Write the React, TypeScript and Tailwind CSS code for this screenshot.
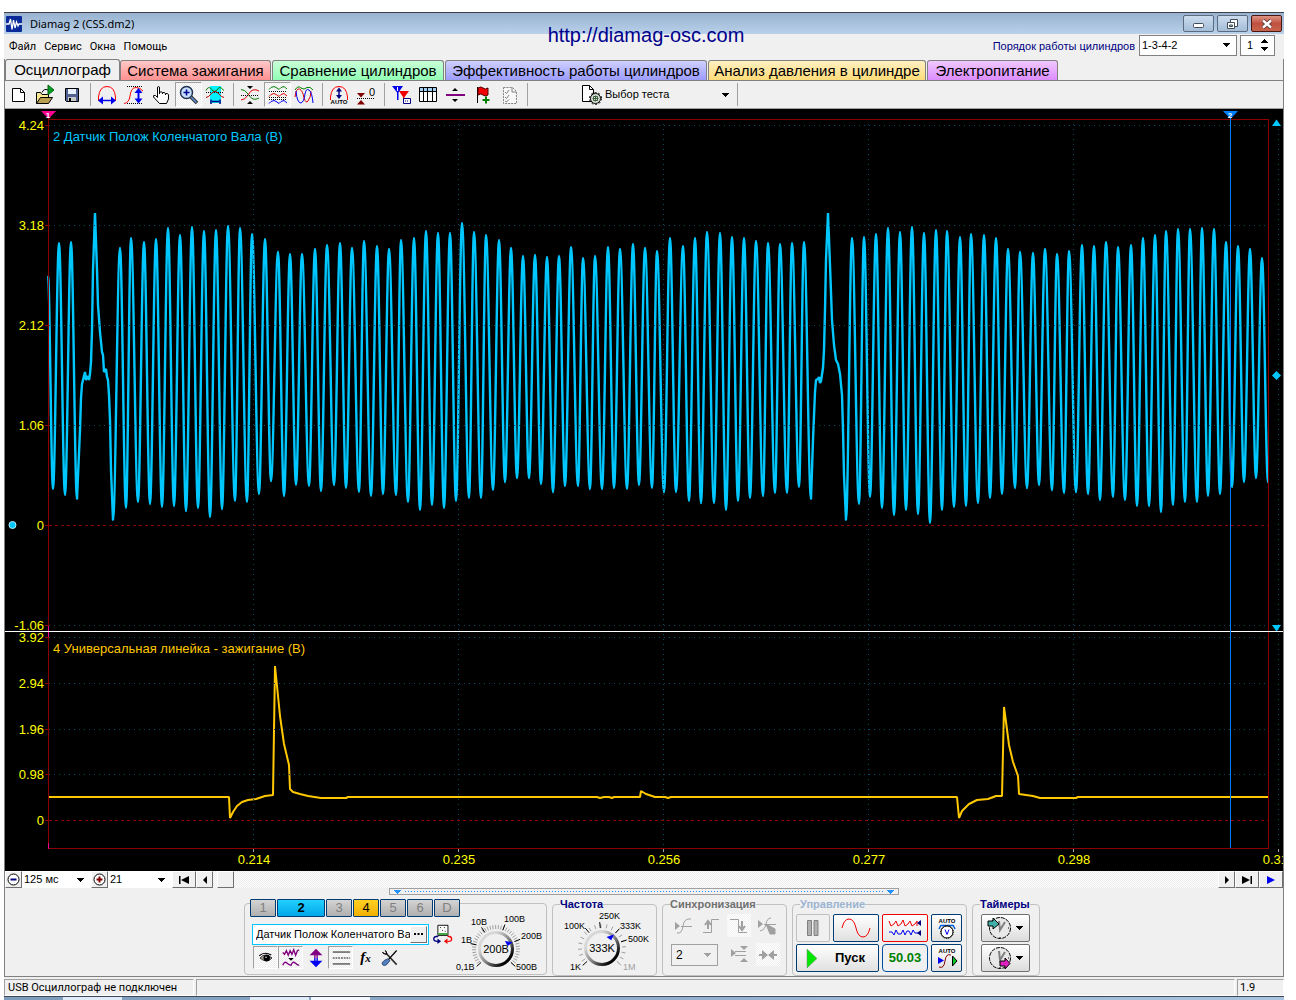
import React, { useState } from 'react'
import clsx from 'clsx'

type Point = [number, number]

// Crankshaft sensor trace: every entry is a local extreme of the signal
const crankStart: Point[] = [
  [48, 275], [53, 489], [59, 243], [65, 495], [71, 242], [77, 499],
]

const crankMiddle: Point[] = [
  [113, 520], [120, 248], [126, 508], [131, 238], [138, 502], [144, 242], [150, 504], [156, 239],
  [162, 507], [168, 228], [174, 506], [180, 235], [186, 511], [192, 227], [198, 508], [204, 231],
  [210, 517], [216, 230], [222, 509], [228, 226], [235, 501], [240, 228], [247, 502], [252, 234],
  [259, 494], [265, 239], [271, 481], [278, 252], [284, 496], [290, 254], [296, 485], [302, 254],
  [309, 486], [315, 249], [321, 491], [327, 245], [334, 485], [340, 243], [346, 488], [352, 248],
  [359, 492], [364, 241], [371, 496], [377, 246], [383, 494], [389, 249], [396, 495], [401, 240],
  [408, 502], [414, 238], [420, 510], [426, 231], [432, 505], [438, 233], [444, 508], [450, 233],
  [456, 501], [462, 223], [469, 498], [474, 232], [481, 498], [486, 235], [493, 490], [499, 240],
  [505, 482], [511, 248], [517, 478], [523, 256], [529, 478], [535, 255], [541, 484], [547, 257],
  [553, 492], [559, 256], [565, 486], [571, 247], [578, 486], [583, 258], [590, 489], [595, 256],
  [602, 489], [608, 247], [614, 488], [620, 249], [627, 489], [633, 244], [639, 485], [645, 248],
  [652, 488], [657, 251], [664, 492], [670, 238], [676, 492], [683, 246], [689, 501], [695, 238],
  [701, 503], [707, 232], [714, 503], [720, 233], [726, 510], [732, 237], [738, 501], [744, 238],
  [750, 498], [756, 241], [763, 496], [768, 243], [775, 493], [780, 244], [787, 493], [792, 243],
  [799, 487], [804, 242], [811, 499],
]

const crankEnd: Point[] = [
  [846, 520], [852, 238], [859, 504], [864, 237], [870, 497], [876, 234], [882, 508], [888, 228],
  [894, 515], [900, 232], [906, 510], [912, 227], [918, 514], [924, 233], [930, 523], [936, 230],
  [942, 510], [947, 231], [954, 507], [960, 237], [966, 506], [971, 234], [978, 503], [984, 235],
  [990, 498], [996, 238], [1002, 494], [1008, 249], [1015, 488], [1020, 252], [1027, 488], [1033, 253],
  [1039, 485], [1045, 249], [1052, 490], [1057, 254], [1064, 493], [1069, 251], [1076, 492], [1082, 245],
  [1088, 494], [1094, 246], [1100, 500], [1106, 242], [1113, 497], [1118, 247], [1125, 500], [1131, 245],
  [1137, 506], [1143, 238], [1149, 506], [1155, 235], [1161, 512], [1166, 231], [1173, 505], [1178, 229],
  [1185, 502], [1190, 229], [1197, 502], [1202, 228], [1208, 496], [1214, 229], [1220, 494], [1226, 242],
  [1232, 487], [1238, 246], [1244, 482], [1250, 249], [1256, 478], [1262, 258], [1268, 482],
]

// Missing teeth of the trigger wheel
const gapOne = 'L80 430L81 398L82 384L83 380L85 372L86 380L88 376L89 380L90 374L91 362L92 330L93 270L95 213L97 270L98 305L100 332L102 352L103 355L104 372L106 369L107 377L108 380L109 395L110 420L111 470L113 520'
const gapTwo = 'L813 440L815 392L816 380L818 379L819 377L820 383L821 381L823 368L824 350L825 310L826 260L828 213L830 265L832 320L834 345L836 360L838 364L840 374L842 395L843 430L844 475L846 520'

const ignition =
  'M48 797H229L230 818L233 812L237 806L242 802L248 800L256 799L265 796L273 795L275 666L277 686L280 716L284 744L289 765L290 789L293 792L300 794L308 796L321 798H346L348 797H597L600 798L604 797H609L612 798L614 797H640L641 791L646 794L655 797H665L668 798L671 797H957L959 818L962 811L969 804L977 800L988 799L996 796H1002L1004 707L1006 722L1009 745L1013 762L1018 776L1019 794L1026 795L1033 796L1040 798H1076L1078 797H1268'

function wave(points: Point[], first: string) {
  let d = first + points[0][0] + ' ' + points[0][1]
  for (let i = 1; i < points.length; i++) {
    const [x0, y0] = points[i - 1]
    const [x1, y1] = points[i]
    const k = (x1 - x0) * 0.36
    d += `C${x0 + k} ${y0} ${x1 - k} ${y1} ${x1} ${y1}`
  }
  return d
}

const crankPath = wave(crankStart, 'M') + gapOne + wave(crankMiddle, 'L') + gapTwo + wave(crankEnd, 'L')

const xTicks = [
  { x: 253, label: '0.214' },
  { x: 458, label: '0.235' },
  { x: 663, label: '0.256' },
  { x: 868, label: '0.277' },
  { x: 1073, label: '0.298' },
  { x: 1278, label: '0.319' },
]

const yTicks = [
  { y: 125, label: '4.24' },
  { y: 225, label: '3.18' },
  { y: 325, label: '2.12' },
  { y: 425, label: '1.06' },
  { y: 525, label: '0', zero: true },
  { y: 625, label: '-1.06' },
  { y: 637, label: '3.92' },
  { y: 683, label: '2.94' },
  { y: 729, label: '1.96' },
  { y: 774, label: '0.98' },
  { y: 820, label: '0', zero: true },
]

function Scope() {
  return (
    <svg viewBox="5 109 1278 762" className="block h-auto w-full bg-black font-['Liberation_Sans',sans-serif]" role="img" aria-label="Осциллограмма">
      <g fill="none" strokeLinejoin="bevel">
        <path d={crankPath} stroke="#00c8ff" strokeWidth="2.400" />
        <path d={ignition} stroke="#ffc800" strokeWidth="2" />
      </g>
      <g shapeRendering="crispEdges" strokeWidth="1">
        {xTicks.map((t) => (
          <g key={t.x}>
            <line x1={t.x + 0.5} x2={t.x + 0.5} y1="124" y2="848" stroke="#0a4666" strokeDasharray="1 4" />
            <line x1={t.x + 0.5} x2={t.x + 0.5} y1="849" y2="852" stroke="#a0a0a0" />
          </g>
        ))}
        {yTicks.map((t) => (
          <g key={t.y}>
            <line
              x1="49"
              x2="1268"
              y1={t.y + 0.5}
              y2={t.y + 0.5}
              stroke={t.zero ? '#900000' : '#0a4666'}
              strokeDasharray={t.zero ? '3 3' : '1 4'}
            />
            <line x1="45" x2="48" y1={t.y + 0.5} y2={t.y + 0.5} stroke="#900000" />
          </g>
        ))}
        <path d="M48.5 119.5H1268.5V848.5H48.5Z" fill="none" stroke="#8c0000" />
        <path d="M48.5 626V637M48.5 843V849" stroke="#ff0090" />
        <path d="M5 631.5H1283" stroke="#fff" />
        <path d="M1230.5 117V848" stroke="#0080ff" />
      </g>
      <path d="M41 111H56L48.5 119Z" fill="#ff0090" />
      <path d="M1223 111H1238L1230.5 119Z" fill="#0080ff" />
      <text x="48" y="118" fill="#fff" fontSize="8" fontWeight="700" textAnchor="middle">1</text>
      <text x="1230" y="118" fill="#fff" fontSize="8" fontWeight="700" textAnchor="middle">2</text>
      <g fill="#00c8ff">
        <path d="M1276.500 119.500L1281 126H1272Z" />
        <path d="M1276.500 371L1281 375.500L1276.500 380L1272 375.500Z" />
        <path d="M1272 625H1281L1276.500 631.500Z" />
        <circle cx="12.500" cy="525" r="3.500" stroke="#b0f0ff" />
      </g>
      <g fontSize="13" fill="#ffff00">
        {yTicks.map((t) => (
          <text key={t.y} x="44" y={t.y + 5} textAnchor="end">{t.label}</text>
        ))}
        {xTicks.map((t) => (
          <text key={t.x} x={t.x + 1} y="864" textAnchor="middle">{t.label}</text>
        ))}
      </g>
      <text x="53" y="141" fontSize="13" fill="#00c8ff">2 Датчик Полож Коленчатого Вала (В)</text>
      <text x="53" y="653" fontSize="13" fill="#ffc800">4 Универсальная линейка - зажигание (В)</text>
    </svg>
  )
}

function Icon({ children, className = 'h-6 w-6' }: { children: React.ReactNode; className?: string }) {
  return (
    <svg viewBox="0 0 24 24" className={clsx('block shrink-0', className)} fill="none" stroke="#000" strokeWidth="1" aria-hidden="true">
      {children}
    </svg>
  )
}

const pressedStyle =
  'border border-t-[#a0a0a0] border-l-[#a0a0a0] border-r-white border-b-white bg-[repeating-conic-gradient(#fff_0_25%,#ececec_0_50%)] bg-[length:2px_2px]'

function ToolButton({ label, pressed, children }: { label: string; pressed?: boolean; children: React.ReactNode }) {
  return (
    <button type="button" aria-label={label} className={clsx('flex h-[25px] w-[27px] items-center pl-px', pressed && pressedStyle)}>
      <Icon>{children}</Icon>
    </button>
  )
}

function Separator() {
  return (
    <div className="flex w-2 shrink-0 justify-center">
      <div className="h-[23px] w-px bg-[#a0a0a0]" />
    </div>
  )
}

const tabs = [
  { label: 'Осциллограф', style: 'h-[21px] w-[115px] bg-[#f0f0f0]' },
  { label: 'Система зажигания', style: 'h-5 w-[151px] bg-linear-to-b from-[#ffc8c8] to-[#ff9090]' },
  { label: 'Сравнение цилиндров', style: 'ml-px h-5 w-[172px] bg-linear-to-b from-[#c8ffd8] to-[#90ffb4]' },
  { label: 'Эффективность работы цилиндров', style: 'ml-px h-5 w-[262px] bg-linear-to-b from-[#d0d0ff] to-[#9c9cff]' },
  { label: 'Анализ давления в цилиндре', style: 'ml-px h-5 w-[218px] bg-linear-to-b from-[#fff0c0] to-[#ffdc78]' },
  { label: 'Электропитание', style: 'ml-px h-5 w-[131px] bg-linear-to-b from-[#f0c8ff] to-[#dc8cff]' },
]

function TitleBar() {
  return (
    <header className="relative flex h-[22px] items-center border-t border-[#404048] bg-linear-to-b from-[#98b2d0] to-[#b9d1ea] pr-0.5 pl-0.5">
      <svg viewBox="0 0 16 16" className="h-4 w-4" aria-hidden="true">
        <rect width="16" height="16" rx="1" fill="#0a2a9a" />
        <path d="M0 8H3L4.500 3L6 13.500L7.500 4L9 12L10.500 6L12 10L13 8H16" fill="none" stroke="#fff" strokeWidth="1.300" />
      </svg>
      <h1 className="ml-2 font-['Noto_Sans',sans-serif] text-[11px] leading-4">Diamag 2 (CSS.dm2)</h1>
      <div className="ml-auto flex gap-[3px]">
        <button type="button" aria-label="Свернуть" className="flex h-[17px] w-[31px] items-center justify-center rounded-xs border border-[#5b6b80] bg-linear-to-b from-[#ccdcee] to-[#a4bdd8]">
          <svg viewBox="0 0 13 5" className="mt-1 h-[5px] w-[13px]"><rect x="1.500" y="0.500" width="10" height="4" rx="1" fill="#fff" stroke="#444c58" /></svg>
        </button>
        <button type="button" aria-label="Восстановить" className="flex h-[17px] w-[31px] items-center justify-center rounded-xs border border-[#5b6b80] bg-linear-to-b from-[#ccdcee] to-[#a4bdd8]">
          <svg viewBox="0 0 13 12" className="h-3 w-[13px]" fill="#fff" stroke="#444c58">
            <path d="M4.500 1.500H11.500V8.500H4.500Z" />
            <path d="M1.500 4.500H8.500V10.500H1.500Z" />
            <path d="M3.500 7H6.500V8.500H3.500Z" fill="#a4bdd8" />
          </svg>
        </button>
        <button type="button" aria-label="Закрыть" className="flex h-[17px] w-[31px] items-center justify-center rounded-xs border border-[#4a1410] bg-linear-to-b from-[#dc9484] via-[#c05040] to-[#c8644c]">
          <svg viewBox="0 0 12 10" className="h-2.5 w-3">
            <path d="M2 1.500L10 8.500M10 1.500L2 8.500" stroke="#50302c" strokeWidth="4" />
            <path d="M2 1.500L10 8.500M10 1.500L2 8.500" stroke="#fff" strokeWidth="2.400" />
          </svg>
        </button>
      </div>
      <a href="http://diamag-osc.com" className="absolute top-2.5 left-1/2 z-10 ml-0.5 -translate-x-1/2 text-[20px] leading-6 text-[#00008c]">
        http://diamag-osc.com
      </a>
    </header>
  )
}

function DownArrow({ className }: { className?: string }) {
  return (
    <svg viewBox="0 0 7 4" className={clsx('pointer-events-none h-1 w-[7px]', className)} shapeRendering="crispEdges" aria-hidden="true">
      <path d="M0 0H7L3.500 4Z" fill="currentColor" />
    </svg>
  )
}

function MenuBar() {
  const [cylinder, setCylinder] = useState(1)
  return (
    <div className="flex h-[25px] items-center pl-[5px]">
      <nav className="flex gap-2 font-[Roboto,sans-serif] text-[11px] leading-4">
        <button type="button">Файл</button>
        <button type="button">Сервис</button>
        <button type="button">Окна</button>
        <button type="button">Помощь</button>
      </nav>
      <label htmlFor="order" className="ml-auto text-[11px] text-[#000080]">Порядок работы цилиндров</label>
      <div className="relative -mt-[3px] ml-1 flex items-center">
        <select id="order" className="h-[21px] w-[98px] appearance-none border border-[#808080] bg-white px-0.5 text-[11px]">
          <option>1-3-4-2</option>
        </select>
        <DownArrow className="absolute right-[7px]" />
      </div>
      <div className="-mt-[3px] mr-[9px] ml-[3px] flex h-[21px] w-[35px] items-center border border-[#808080] bg-white">
        <input aria-label="Цилиндр" value={cylinder} onChange={(e) => setCylinder(Number(e.target.value) || 1)} className="w-5 pl-1.5 text-[11px] outline-none" />
        <div className="flex flex-col gap-1">
          <button type="button" aria-label="Больше" onClick={() => setCylinder(cylinder + 1)}>
            <DownArrow className="block rotate-180" />
          </button>
          <button type="button" aria-label="Меньше" onClick={() => setCylinder(Math.max(1, cylinder - 1))}>
            <DownArrow className="block" />
          </button>
        </div>
      </div>
    </div>
  )
}

function Toolbar() {
  return (
    <div className="flex h-[29px] items-center border-t border-b border-[#808080] border-b-[#a0a0a0]">
      <ToolButton label="Новый">
        <path d="M6.500 5.500H14.500L18.500 9.500V18.500H6.500Z" fill="#fff" />
        <path d="M14.500 5.500V9.500H18.500" />
      </ToolButton>
      <ToolButton label="Открыть">
        <path d="M3.500 20.500V9.500H7.500L9 11.500H15.500V14.500" fill="#f8e890" />
        <path d="M3.500 20.500L7.500 14.500H19.500L15.500 20.500Z" fill="#b8a050" />
        <path d="M9 9.500Q11 5 15 7" />
        <path d="M15 2V12L21 7Z" fill="#00a020" stroke="#006010" />
      </ToolButton>
      <ToolButton label="Сохранить">
        <path d="M5.500 5.500H18.500V18.500H6.500L5.500 17.500Z" fill="#506090" />
        <path d="M8 6H16V11H8Z" fill="#e8f0ff" stroke="none" />
        <path d="M8 14H16V18H8Z" fill="#c8c8c8" stroke="none" />
        <path d="M9 15H11V18H9Z" fill="#000" stroke="none" />
      </ToolButton>
      <Separator />
      <ToolButton label="Период">
        <path d="M3.500 18V14Q4.500 3.500 12 3.500Q19.500 3.500 20.500 14V18" stroke="#f00" />
        <path d="M5 17.500H19" stroke="#0000f0" strokeWidth="1.500" />
        <path d="M3 17.500L8 13.500V21.500ZM21 17.500L16 13.500V21.500Z" fill="#0000f0" stroke="none" />
      </ToolButton>
      <ToolButton label="Амплитуда">
        <path d="M5 3.500H20M5 20.500H20" strokeDasharray="1 1" />
        <path d="M2 20.500Q7 20 8 13Q9 4.500 14 4.500Q18 4.500 21 8" stroke="#f00" />
        <path d="M16.500 8V18" stroke="#0000f0" strokeWidth="2" />
        <path d="M16.500 5L20.500 10H12.500ZM16.500 20.500L20.500 15.500H12.500Z" fill="#0000f0" stroke="none" />
      </ToolButton>
      <ToolButton label="Рука">
        <path d="M8.500 14.500V5Q8.500 3.500 9.500 3.500T10.500 5V11V9.500Q12 8 13.500 9.500V11V10Q15 8.500 16.500 10.500V12V11Q18 9.500 19.500 11.500V16L17.500 20.500H10.500L4.500 14Q4 11.500 6.500 12.500Z" fill="#fff" />
      </ToolButton>
      <ToolButton label="Масштаб" pressed>
        <path d="M14 14L20 20" stroke="#303030" strokeWidth="3.500" />
        <path d="M14 14L19.500 19.500" stroke="#6090e0" strokeWidth="1.500" />
        <circle cx="9.500" cy="9.500" r="6" fill="#c8e0ff" stroke="#203050" strokeWidth="1.500" />
        <path d="M6.500 9.500H12.500M9.500 6.500V12.500" stroke="#000090" strokeWidth="1.500" />
      </ToolButton>
      <ToolButton label="Выделение">
        <path d="M7 3H18V20H7Z" fill="#00f0ff" stroke="none" />
        <path d="M3 7.500Q5 3 8 5.500L10 8Q12 9 14 7L16 4.500Q18 4 21 7.500" stroke="#008000" />
        <path d="M3 9.500H21" strokeDasharray="1 1" />
        <path d="M3 14.500Q6 14 8 11Q12 6 16 11Q18 14 21 14.500" stroke="#c00000" />
        <path d="M8 16.500V21M17 16.500V21M9 18.500H16" stroke="#000080" strokeWidth="1.500" />
      </ToolButton>
      <Separator />
      <ToolButton label="Наложение">
        <path d="M3 6.500Q7 6.500 10 11T15 16Q18 17 21 15" stroke="#008000" />
        <path d="M3 17Q7 17 10 12T15 7Q18 6 21 8" stroke="#e00000" />
        <path d="M3 12.500H21" strokeDasharray="1 1" />
        <path d="M9 3H15L12 6ZM9 21H15L12 18Z" fill="#000" stroke="none" />
      </ToolButton>
      <ToolButton label="Разделить каналы" pressed>
        <path d="M3 6.500L5 4.500L8 3.500L11 5L13 6.500L15 4.500L18 3.500L21 6" stroke="#008000" />
        <path d="M3 13.500L5 11.500L8 10.500L11 12L13 13.500L15 11.500L18 10.500L21 13" stroke="#e00000" />
        <path d="M3 20.500L5 18.500L8 17.500L11 19L13 20.500L15 18.500L18 17.500L21 20" stroke="#0000f0" />
        <path d="M3 8.500H21M3 14.500H21M3 16.500H21" strokeDasharray="1 1" />
      </ToolButton>
      <ToolButton label="Совместить каналы">
        <path d="M3 7Q6 2 9 5Q12 7.500 15 4.500Q18 3 21 7" stroke="#008000" />
        <path d="M3 14Q4 5 7.500 6Q11 8 12 15Q14 21 16 18Q19 14 19 8" stroke="#e00000" />
        <path d="M4 8Q5 20 9 20Q12 19 13 11Q14 5 17 7Q20 9 21 20" stroke="#0000f0" />
      </ToolButton>
      <Separator />
      <ToolButton label="Автомасштаб">
        <path d="M3.500 17V14Q4.500 3.500 12 3.500Q19.500 3.500 20.500 14V17" stroke="#f00" />
        <path d="M12 7V13" stroke="#000080" strokeWidth="1.500" />
        <path d="M12 4.500L15 8.500H9ZM12 16L15 12H9Z" fill="#000080" stroke="none" />
        <text x="12" y="21" fontSize="6" fontWeight="700" textAnchor="middle" fill="#000" stroke="none">AUTO</text>
      </ToolButton>
      <ToolButton label="Установить ноль">
        <path d="M3 10H11L7 14.500ZM3 21.500H11L7 17Z" fill="#800000" stroke="none" />
        <path d="M3 15.500H21" strokeDasharray="1 1" />
        <text x="18" y="12.500" fontSize="11" textAnchor="middle" fill="#000" stroke="none">0</text>
      </ToolButton>
      <Separator />
      <ToolButton label="Маркеры">
        <path d="M3 3H14L9.500 9.500V17H8V9.500Z" fill="#0000f0" stroke="none" />
        <path d="M10 8H20L15.500 14V19H14V14Z" fill="#f00000" stroke="none" />
        <path d="M8.500 4V8" stroke="#fff" />
        <path d="M14.500 15.500H21.500V20.500H14.500Z" fill="#fff" stroke="#000080" />
        <path d="M16 18H20" stroke="#000080" strokeDasharray="1 1" />
      </ToolButton>
      <ToolButton label="Таблица">
        <path d="M3.500 4.500H20.500V18.500H3.500Z" fill="#fff" />
        <path d="M4 5H20V8H4Z" fill="#a0d0f0" stroke="none" />
        <path d="M3.500 8.500H20.500M7.500 4.500V18.500M11.500 4.500V18.500M16.500 4.500V18.500" />
      </ToolButton>
      <ToolButton label="Линейка">
        <path d="M3 12H22" stroke="#800080" strokeWidth="2" />
        <path d="M9 8H15L12 5ZM9 16H15L12 19Z" fill="#000" stroke="none" />
      </ToolButton>
      <ToolButton label="Добавить метку">
        <path d="M7.500 4V20" />
        <path d="M8 5Q11 3 13 5T18 5V12Q15 14 13 12T8 12Z" fill="#f00000" stroke="#500000" />
        <path d="M16 13.500V20.500M12.500 17H19.500" stroke="#008000" strokeWidth="2" />
      </ToolButton>
      <ToolButton label="Отчёт">
        <path d="M6.500 4.500H15.500L19.500 8.500V20.500H6.500Z" fill="#f8f8f8" stroke="#808080" strokeDasharray="2 1" />
        <path d="M8 9L9.500 10.500L12 7M8 14L9.500 15.500L12 12M8 18L9.500 19L12 16.500M15 4.500V9H19" stroke="#808080" />
      </ToolButton>
      <Separator />
      <button type="button" className="flex h-[25px] w-[202px] items-center pl-[49px] text-[11px]">
        <Icon>
          <path d="M2.500 2.500H9.500L13.500 6.500V18.500H2.500Z" fill="#fff" />
          <path d="M9.500 2.500V6.500H13.500" />
          <circle cx="15.500" cy="15.500" r="5" fill="#d8e0d8" />
          <circle cx="15.500" cy="15.500" r="6" strokeDasharray="2 1.800" />
          <path d="M13.500 13.500H17.500V17.500H13.500ZM15.500 12.500V18.500M12.500 15.500H18.500" stroke="#406040" />
        </Icon>
        <span className="pl-px">Выбор теста</span>
        <DownArrow className="mr-1 ml-auto" />
      </button>
      <Separator />
    </div>
  )
}

const raised = 'border border-t-white border-l-white border-r-[#707070] border-b-[#707070] bg-[#f0f0f0] flex items-center justify-center'

function ScrollRow() {
  return (
    <div className="flex h-[17px] items-stretch text-[11px]">
      <button type="button" aria-label="Уменьшить развёртку" className={clsx(raised, 'w-[17px]')}>
        <svg viewBox="0 0 13 13" className="h-[13px] w-[13px]"><circle cx="6.500" cy="6.500" r="5.500" fill="#fff" stroke="#000" /><path d="M3.500 6.500H9.500" stroke="#000080" strokeWidth="2" /></svg>
      </button>
      <div className="relative flex items-center">
        <select aria-label="Развёртка" className="h-[17px] w-[69px] appearance-none bg-white pl-0.5">
          <option>125 мс</option>
        </select>
        <DownArrow className="absolute right-[7px]" />
      </div>
      <button type="button" aria-label="Увеличить развёртку" className={clsx(raised, 'w-[17px]')}>
        <svg viewBox="0 0 13 13" className="h-[13px] w-[13px]"><circle cx="6.500" cy="6.500" r="5.500" fill="#fff" stroke="#000" /><path d="M3.500 6.500H9.500M6.500 3.500V9.500" stroke="#800000" strokeWidth="2" /></svg>
      </button>
      <div className="relative flex items-center">
        <select aria-label="Масштаб" className="h-[17px] w-16 appearance-none bg-white pl-0.5">
          <option>21</option>
        </select>
        <DownArrow className="absolute right-[7px]" />
      </div>
      <button type="button" aria-label="В начало" className={clsx(raised, 'w-6')}>
        <svg viewBox="0 0 10 8" className="h-2 w-2.5"><path d="M0 0H1.500V8H0ZM10 0V8L2 4Z" /></svg>
      </button>
      <button type="button" aria-label="Назад" className={clsx(raised, 'w-[17px]')}>
        <svg viewBox="0 0 4 8" className="h-2 w-1"><path d="M4 0V8L0 4Z" /></svg>
      </button>
      <div className="flex flex-1 bg-[repeating-conic-gradient(#fff_0_25%,#ececec_0_50%)] bg-[length:2px_2px] pl-1">
        <div className={clsx(raised, 'w-[17px]')} />
      </div>
      <button type="button" aria-label="Вперёд" className={clsx(raised, 'w-[17px]')}>
        <svg viewBox="0 0 4 8" className="h-2 w-1"><path d="M0 0V8L4 4Z" /></svg>
      </button>
      <button type="button" aria-label="В конец" className={clsx(raised, 'w-6')}>
        <svg viewBox="0 0 10 8" className="h-2 w-2.5"><path d="M10 0H8.500V8H10ZM0 0V8L8 4Z" /></svg>
      </button>
      <button type="button" aria-label="Воспроизвести" className={clsx(raised, 'w-6')}>
        <svg viewBox="0 0 8 8" className="h-2 w-2"><path d="M0 0V8L8 4Z" fill="#0000f0" /></svg>
      </button>
    </div>
  )
}

interface KnobMark {
  text: string
  x: number
  y: number
  angle: number
  muted?: boolean
}

function Knob({ value, cx, cy, marks, step, pointer }: { value: string; cx: number; cy: number; marks: KnobMark[]; step: number; pointer: number }) {
  const at = (r: number, deg: number) => {
    const a = (deg * Math.PI) / 180
    return `${(cx + r * Math.cos(a)).toFixed(1)} ${(cy - r * Math.sin(a)).toFixed(1)}`
  }
  let ticks = ''
  for (let deg = -42; deg <= 222; deg += step) ticks += `M${at(20, deg)}L${at(24, deg)}`
  const gradient = 'rim' + cx
  return (
    <svg viewBox="0 0 92 66" className="block h-[66px] w-[92px]" role="img" aria-label={value}>
      <defs>
        <linearGradient id={gradient} x1="0" y1="0" x2="1" y2="1">
          <stop offset="0.250" stopColor="#d8d8d8" />
          <stop offset="0.550" stopColor="#808080" />
          <stop offset="0.850" stopColor="#000" />
        </linearGradient>
      </defs>
      <path d={ticks} stroke="#a0a0a0" />
      {marks.map((m) => (
        <path key={m.text} d={`M${at(20, m.angle)}L${at(26, m.angle)}`} stroke={m.muted ? '#b0b0b0' : '#000'} />
      ))}
      <circle cx={cx} cy={cy} r="16.500" fill="#f0f0f0" stroke={`url(#${gradient})`} strokeWidth="3" />
      <path d={`M${at(18, pointer)}L${at(12, pointer + 20)}L${at(12, pointer - 8)}Z`} fill="#0000f0" />
      <text x={cx} y={cy + 4} fontSize="11" textAnchor="middle">{value}</text>
      <g fontSize="9">
        {marks.map((m) => (
          <text key={m.text} x={m.x} y={m.y} fill={m.muted ? '#a0a0a0' : '#000'}>{m.text}</text>
        ))}
      </g>
    </svg>
  )
}

const channels = [
  { name: '1', style: 'w-[26px] from-[#d4d4d4] to-[#b0b0b0] text-[#808080]' },
  { name: '2', style: 'w-12 from-[#20d0ff] to-[#00a8e8] font-bold text-black' },
  { name: '3', style: 'w-[26px] from-[#d4d4d4] to-[#b0b0b0] text-[#808080]' },
  { name: '4', style: 'w-[26px] from-[#ffd020] to-[#f0b000] text-black' },
  { name: '5', style: 'w-[26px] from-[#d4d4d4] to-[#b0b0b0] text-[#808080]' },
  { name: '6', style: 'w-[26px] from-[#d4d4d4] to-[#b0b0b0] text-[#808080]' },
  { name: 'D', style: 'w-[26px] from-[#d4d4d4] to-[#b0b0b0] text-[#808080]' },
]

function ChannelGroup() {
  const [sensor, setSensor] = useState('Датчик Полож Коленчатого Вала')
  return (
    <section aria-label="Каналы" className="mt-[5px] flex h-[72px] w-[303px] rounded-[4px] border border-[#c0c0c0] pl-[5px]">
      <div className="-mt-[5px] w-[216px]">
        <div className="flex gap-px bg-[#f0f0f0]">
          {channels.map((c) => (
            <button key={c.name} type="button" className={clsx('h-[18px] rounded-[1px] border border-[#003c74] bg-linear-to-b text-[13px] leading-4', c.style)}>
              {c.name}
            </button>
          ))}
        </div>
        <div className="mt-1.5 flex items-center pl-0.5">
          <div className="flex h-[21px] w-[177px] items-center border border-[#00c8ff] bg-white pr-px">
            <input aria-label="Датчик" value={sensor} onChange={(e) => setSensor(e.target.value)} className="min-w-0 flex-1 pl-[3px] text-[11px] outline-none" />
            <button type="button" aria-label="Выбрать датчик" className={clsx(raised, 'h-[17px] w-[17px]')}>
              <svg viewBox="0 0 9 2" className="h-0.5 w-[9px]"><path d="M0 0H2V2H0ZM3.500 0H5.500V2H3.500ZM7 0H9V2H7Z" /></svg>
            </button>
          </div>
          <button type="button" aria-label="Сменить датчик" className="ml-0.5">
            <Icon className="h-[22px] w-[22px]">
              <path d="M7.500 2.500H18.500V13.500H7.500Z" fill="#fff" />
              <path d="M8 11H18V13H8Z" fill="#30a030" stroke="none" />
              <path d="M10 5H11M14 5H15M12 8H13M15 9H16" />
              <path d="M8 14.500Q3 14.500 3 17.500T8 20" stroke="#000080" strokeWidth="1.500" />
              <path d="M7 17L11 20L7 23Z" fill="#000080" stroke="none" />
              <path d="M18 14.500Q22.500 14.500 22.500 17.500T18 20" stroke="#f00000" strokeWidth="1.500" />
              <path d="M18 17L14 20L18 23Z" fill="#f00000" stroke="none" />
            </Icon>
          </button>
        </div>
        <div className="mt-px flex pl-[3px]">
          <button type="button" aria-label="Показать канал" className={clsx('flex h-[23px] w-[25px] items-center justify-center', pressedStyle)}>
            <Icon className="h-[18px] w-[18px]">
              <path d="M4 12Q11 4 20 12Q13 20 4 12Z" fill="#b0a8a0" />
              <circle cx="13" cy="12" r="4" fill="#000" />
              <path d="M3 9Q10 3 19 8" strokeWidth="1.500" />
              <circle cx="12" cy="11" r="1" fill="#fff" stroke="none" />
            </Icon>
          </button>
          <button type="button" aria-label="Фильтр" className={clsx('flex h-[23px] w-[25px] items-center justify-center', pressedStyle)}>
            <Icon className="h-[22px] w-[22px]">
              <path d="M3 6L5 8L7 4L9 9L11 4L13 8L15 3L17 9L19 4L21 3" stroke="#800080" strokeWidth="1.500" />
              <path d="M9 12H15L12 15Z" fill="#000" stroke="none" />
              <path d="M3 20Q5 15 7.500 17.500T12 20Q14 15 16.500 17.500T21 20" stroke="#800080" strokeWidth="1.500" />
            </Icon>
          </button>
          <button type="button" aria-label="Инверсия" className="flex h-[23px] w-[25px] items-center justify-center">
            <Icon className="h-[22px] w-[22px]">
              <path d="M12 2L19 9H14V12H10V9H5Z" fill="#800080" stroke="none" />
              <path d="M12 22L19 15H14V12H10V15H5Z" fill="#0000f0" stroke="none" />
              <path d="M12 9V15" stroke="#f0f0f0" />
            </Icon>
          </button>
          <button type="button" aria-label="Уровни" className={clsx('flex h-[23px] w-[25px] items-center justify-center', pressedStyle)}>
            <Icon className="h-[22px] w-[22px]">
              <path d="M3 5.500H22M3 18.500H22" />
              <path d="M3 12H22" strokeDasharray="2 1" />
            </Icon>
          </button>
          <button type="button" aria-label="Функция" className="h-[23px] w-[25px] font-['Liberation_Serif',serif] text-[15px] leading-5 font-bold italic">
            f<span className="text-[11px]">x</span>
          </button>
          <button type="button" aria-label="Настройки" className="flex h-[23px] w-6 items-center justify-center">
            <Icon className="h-5 w-5">
              <path d="M7 6L20 20" strokeWidth="2" stroke="#303030" />
              <path d="M3 5Q5 8 8 7Q8 4 6 3" strokeWidth="1.500" />
              <path d="M20 3L10 14" strokeWidth="1.500" />
              <path d="M9 13L12 15L8 20Q5 22 3 20T5 15Z" fill="#5080c0" stroke="#304060" />
            </Icon>
          </button>
        </div>
      </div>
      <div className="-ml-1.5 pt-1">
        <Knob
          value="200В"
          cx={42}
          cy={41}
          step={7}
          pointer={22}
          marks={[
            { text: '0,1В', x: 2, y: 62, angle: 222 },
            { text: '1В', x: 7, y: 35, angle: 168 },
            { text: '10В', x: 17, y: 17, angle: 124 },
            { text: '100В', x: 50, y: 14, angle: 70 },
            { text: '200В', x: 67, y: 31, angle: 22 },
            { text: '500В', x: 62, y: 62, angle: -42 },
          ]}
        />
      </div>
    </section>
  )
}

function Group({ title, titleStyle, className, children }: { title: string; titleStyle: string; className: string; children: React.ReactNode }) {
  return (
    <fieldset className={clsx('h-[78px] rounded-[4px] border border-[#c0c0c0]', className)}>
      <legend className={clsx('ml-[7px] text-[11px] leading-3 font-bold', titleStyle)}>{title}</legend>
      {children}
    </fieldset>
  )
}

const pushButton = 'flex h-7 items-center justify-center rounded-[2px] border border-[#003c74] bg-linear-to-b from-white to-[#e0e0e0]'

function SyncButton({ label, pressed, children }: { label: string; pressed?: boolean; children: React.ReactNode }) {
  return (
    <button
      type="button"
      aria-label={label}
      className={clsx('flex h-[23px] w-6 items-center justify-center', pressed && 'bg-[repeating-conic-gradient(#fff_0_25%,#f0f0f0_0_50%)] bg-[length:2px_2px]')}
    >
      <svg viewBox="0 0 20 20" className="h-5 w-5" fill="none" stroke="#a0a0a0" aria-hidden="true">{children}</svg>
    </button>
  )
}

function TimerButton({ label, children }: { label: string; children: React.ReactNode }) {
  return (
    <button type="button" aria-label={label} className="flex h-7 w-[49px] items-center rounded-[2px] border border-[#707070] bg-linear-to-b from-white to-[#dcdcdc] pl-[5px]">
      <Icon>
        <circle cx="13" cy="12" r="10.500" fill="#e8e8e8" strokeDasharray="4 1" />
        <path d="M12 5L13 14L18 6" stroke="#808080" strokeWidth="2" />
        <path d="M21 12H22M13 21V22" />
        {children}
      </Icon>
      <DownArrow className="ml-[5px]" />
    </button>
  )
}

function ControlPanel() {
  return (
    <div className="flex h-[81px] items-start justify-center gap-[5px] pt-[3px] pr-1">
      <ChannelGroup />
      <Group title="Частота" titleStyle="text-[#000080]" className="w-[105px]">
        <div className="-mt-0.5 pl-[5px]">
          <Knob
            value="333K"
            cx={44}
            cy={40}
            step={15}
            pointer={48}
            marks={[
              { text: '100K', x: 6, y: 21, angle: 130 },
              { text: '250K', x: 41, y: 11, angle: 95 },
              { text: '333K', x: 62, y: 21, angle: 48 },
              { text: '500K', x: 70, y: 34, angle: 18 },
              { text: '1K', x: 12, y: 62, angle: 222 },
              { text: '1M', x: 65, y: 62, angle: -42, muted: true },
            ]}
          />
        </div>
      </Group>
      <Group title="Синхронизация" titleStyle="text-[#707070]" className="w-[125px]">
        <div className="mt-1 flex gap-1 pl-2">
          <SyncButton label="Уровень">
            <path d="M2 6L7 10L2 14Z" fill="#a0a0a0" stroke="none" />
            <path d="M4 17Q9 18 10 10T18 3M8 10.500H19" />
          </SyncButton>
          <SyncButton label="Передний фронт">
            <path d="M2 16.500H10.500V3.500H18" />
            <path d="M7 6V13M4 9L7 5L10 9" strokeWidth="2" />
          </SyncButton>
          <SyncButton label="Задний фронт" pressed>
            <path d="M1 3.500H9.500V16.500H18" />
            <path d="M13 5V12M10 10L13 14L16 10" strokeWidth="2" />
          </SyncButton>
          <SyncButton label="Захват">
            <path d="M1 4L6 8L1 12Z" fill="#a0a0a0" stroke="none" />
            <path d="M3 15Q8 14 9 8T14 2M7 8.500H19" />
            <path d="M9 8L18 13V18H13Z" fill="#a0a0a0" />
          </SyncButton>
        </div>
        <div className="mt-1.5 flex items-center pl-2">
          <div className="relative flex items-center">
            <select aria-label="Канал синхронизации" className="h-[22px] w-[47px] appearance-none border border-[#a0a0a0] pl-1 text-[12px]">
              <option>2</option>
            </select>
            <DownArrow className="absolute right-[7px] text-[#a0a0a0]" />
          </div>
          <div className="ml-2.5 flex gap-1">
            <SyncButton label="Гистерезис">
              <path d="M1 4L6 8L1 12ZM10 1H18L14 5ZM10 17H18L14 13Z" fill="#a0a0a0" stroke="none" />
              <path d="M5 6.500H16M5 10.500H16" />
            </SyncButton>
            <SyncButton label="Центр" pressed>
              <path d="M1 10H6M14 10H19" strokeWidth="2" />
              <path d="M4 5L10 10L4 15ZM16 5L10 10L16 15Z" fill="#a0a0a0" stroke="none" />
            </SyncButton>
          </div>
        </div>
      </Group>
      <Group title="Управление" titleStyle="text-[#9cb4d0]" className="w-[175px]">
        <div className="mt-1 flex gap-[3px] pl-[3px]">
          <button type="button" aria-label="Пауза" disabled className="flex h-7 w-[34px] items-center justify-center rounded-[2px] border border-[#c0c0c0]">
            <svg viewBox="0 0 12 16" className="h-4 w-3" fill="#b0b0b0" stroke="#808080"><path d="M0.500 0.500H4.500V15.500H0.500ZM7 0.500H11V15.500H7Z" /></svg>
          </button>
          <button type="button" aria-label="Один кадр" className={clsx(pushButton, 'w-[46px]')}>
            <svg viewBox="0 0 30 20" className="h-5 w-[30px]" fill="none" stroke="#f00000"><path d="M1 10Q3 1 8 1T15 10T22 19T29 10" /></svg>
          </button>
          <button type="button" aria-label="Непрерывно" className="flex h-7 w-[46px] items-center justify-center rounded-[2px] border border-[#f00000] bg-linear-to-b from-white to-[#e8e8e8]">
            <svg viewBox="0 0 34 20" className="h-5 w-[34px]" fill="none">
              <path d="M1 3L3 8L6 6L8 3L10 8L13 6L15 2L17 8L20 6L22 3L24 8L27 6L29 3V8" stroke="#f00000" />
              <path d="M1 14H4L6 17L8 12L10 16H13L15 12L17 17L19 13H21L23 17L25 12L27 15H30" stroke="#0000f0" />
              <path d="M33 2V8L29 5ZM33 12V18L29 15Z" fill="#000080" />
            </svg>
          </button>
          <button type="button" aria-label="Авто масштаб" className={clsx(pushButton, 'w-[31px]')}>
            <Icon>
              <text x="12" y="7" fontSize="6" fontWeight="700" textAnchor="middle" fill="#000" stroke="none">AUTO</text>
              <path d="M6 9.500H18M4 13L6 9M20 13L18 9" stroke="#0060e0" strokeWidth="1.500" />
              <circle cx="12" cy="16" r="6" fill="#fff" />
              <circle cx="12" cy="16" r="6.500" strokeDasharray="1 1.500" />
              <path d="M10 13.500L12 18.500L14 13.500" stroke="#0000f0" />
            </Icon>
          </button>
        </div>
        <div className="mt-0.5 flex gap-[3px] pl-[3px]">
          <button type="button" className={clsx(pushButton, 'w-[83px] gap-[18px] pr-1 text-[13px] font-bold')}>
            <svg viewBox="0 0 11 19" className="h-[19px] w-[11px]"><path d="M1 0L11 9.500L1 19Z" fill="#00e800" stroke="#808080" strokeWidth="0.500" /></svg>
            Пуск
          </button>
          <output className="flex h-7 w-[46px] items-center justify-center rounded-[4px] border border-[#0050a0] text-[13px] font-bold text-[#008000]">50.03</output>
          <button type="button" aria-label="Авто запуск" className={clsx(pushButton, 'w-[31px]')}>
            <Icon>
              <text x="12" y="7" fontSize="6" fontWeight="700" textAnchor="middle" fill="#000" stroke="none">AUTO</text>
              <path d="M4 21Q9 23 10 15T16 9" stroke="#800000" />
              <path d="M3 11L9 14.500L3 18Z" fill="#0000f0" stroke="none" />
              <path d="M17.500 10V20L22 15Z" fill="#00c820" />
            </Icon>
          </button>
        </div>
      </Group>
      <Group title="Таймеры" titleStyle="text-[#000080]" className="w-[68px]">
        <div className="mt-1 flex flex-col gap-0.5 pl-2">
          <TimerButton label="Таймер запуска">
            <path d="M1 5H6V2L12 8L6 13V10H1Z" fill="#40b0a8" />
          </TimerButton>
          <TimerButton label="Таймер остановки">
            <path d="M13 15H18V12L23 17.500L18 23V20H13Z" fill="#e020c0" />
          </TimerButton>
        </div>
      </Group>
    </div>
  )
}

export default function App() {
  const [active, setActive] = useState(0)
  return (
    <div className="min-h-screen bg-white pt-3 pr-3 pl-1 font-['Liberation_Sans',Arial,sans-serif] text-black">
      <div className="bg-[#f0f0f0]">
        <TitleBar />
        <MenuBar />
        <main className="border-x border-[#808080]">
          <div role="tablist" className="flex h-[21px] items-end">
            {tabs.map((tab, i) => (
              <button
                key={tab.label}
                type="button"
                role="tab"
                aria-selected={i === active}
                onClick={() => setActive(i)}
                className={clsx('shrink-0 rounded-t-[3px] border border-b-0 border-[#808080] text-[15px] leading-5 whitespace-nowrap', tab.style)}
              >
                {tab.label}
              </button>
            ))}
          </div>
          <Toolbar />
          <Scope />
          <ScrollRow />
          <div className="flex h-[7px] justify-center">
            <div className="flex w-[510px] items-center justify-between border border-[#a0a0a0] px-1">
              <DownArrow className="text-[#2090ff]" />
              <div className="mx-1 h-px flex-1 bg-[repeating-linear-gradient(90deg,#2090ff_0_1px,transparent_1px_3px)]" />
              <DownArrow className="text-[#2090ff]" />
            </div>
          </div>
          <ControlPanel />
        </main>
        <footer className="flex h-5 items-stretch gap-0.5 border-t border-[#808080] pt-0.5 font-[Roboto,sans-serif] text-[11px] leading-[15px]">
          <div className="w-[190px] border border-t-[#a0a0a0] border-r-white border-b-white border-l-[#a0a0a0] pl-[3px]">USB Осциллограф не подключен</div>
          <div className="flex-1 border border-t-[#a0a0a0] border-r-white border-b-white border-l-[#a0a0a0]" />
          <div className="w-[47px] border border-t-[#a0a0a0] border-r-white border-b-white border-l-[#a0a0a0] pl-0.5">1.9</div>
        </footer>
        <div className="flex h-1 border-t border-[#404858] bg-linear-to-r from-[#7c9cbc] to-[#a8c4e0]">
          <div className="ml-[59px] w-[59px] bg-[#e0ecf8]" />
          <div className="ml-[128px] w-[59px] bg-[#e0ecf8]" />
          <div className="ml-0.5 w-[59px] bg-[#f4f8fc]" />
        </div>
      </div>
    </div>
  )
}
